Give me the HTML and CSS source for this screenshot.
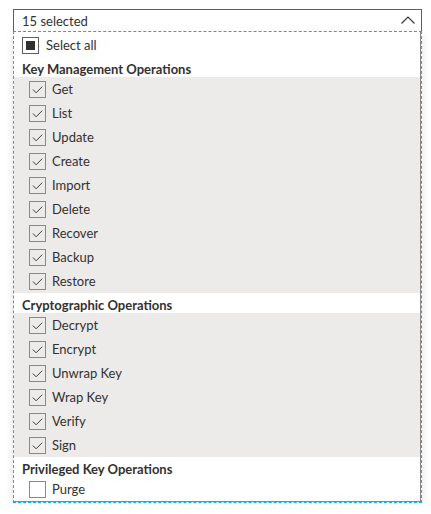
FILE: index.html
```html
<!DOCTYPE html>
<html>
<head>
<meta charset="utf-8">
<link rel="stylesheet" href="styles.css">
</head>
<body>
<div class="dropdown">
  <div class="title">
    <span class="title-text">15 selected</span>
    <svg class="chevron" width="14" height="8" viewBox="0 0 14 8"><polyline points="0.5,7.5 7,1 13.5,7.5" fill="none" stroke="#323130" stroke-width="1.1"/></svg>
  </div>
  <div class="panel">
    <div class="inner">
      <div class="row selectall">
        <span class="box"><span class="indet"></span></span>
        <span class="label">Select all</span>
      </div>

      <div class="group">Key Management Operations</div>
      <div class="items">
        <div class="row"><span class="box"><svg viewBox="0 0 16 16"><polyline points="3,8 6.5,11.5 13,5" /></svg></span><span class="label">Get</span></div>
        <div class="row"><span class="box"><svg viewBox="0 0 16 16"><polyline points="3,8 6.5,11.5 13,5" /></svg></span><span class="label">List</span></div>
        <div class="row"><span class="box"><svg viewBox="0 0 16 16"><polyline points="3,8 6.5,11.5 13,5" /></svg></span><span class="label">Update</span></div>
        <div class="row"><span class="box"><svg viewBox="0 0 16 16"><polyline points="3,8 6.5,11.5 13,5" /></svg></span><span class="label">Create</span></div>
        <div class="row"><span class="box"><svg viewBox="0 0 16 16"><polyline points="3,8 6.5,11.5 13,5" /></svg></span><span class="label">Import</span></div>
        <div class="row"><span class="box"><svg viewBox="0 0 16 16"><polyline points="3,8 6.5,11.5 13,5" /></svg></span><span class="label">Delete</span></div>
        <div class="row"><span class="box"><svg viewBox="0 0 16 16"><polyline points="3,8 6.5,11.5 13,5" /></svg></span><span class="label">Recover</span></div>
        <div class="row"><span class="box"><svg viewBox="0 0 16 16"><polyline points="3,8 6.5,11.5 13,5" /></svg></span><span class="label">Backup</span></div>
        <div class="row"><span class="box"><svg viewBox="0 0 16 16"><polyline points="3,8 6.5,11.5 13,5" /></svg></span><span class="label">Restore</span></div>
      </div>

      <div class="group">Cryptographic Operations</div>
      <div class="items">
        <div class="row"><span class="box"><svg viewBox="0 0 16 16"><polyline points="3,8 6.5,11.5 13,5" /></svg></span><span class="label">Decrypt</span></div>
        <div class="row"><span class="box"><svg viewBox="0 0 16 16"><polyline points="3,8 6.5,11.5 13,5" /></svg></span><span class="label">Encrypt</span></div>
        <div class="row"><span class="box"><svg viewBox="0 0 16 16"><polyline points="3,8 6.5,11.5 13,5" /></svg></span><span class="label">Unwrap Key</span></div>
        <div class="row"><span class="box"><svg viewBox="0 0 16 16"><polyline points="3,8 6.5,11.5 13,5" /></svg></span><span class="label">Wrap Key</span></div>
        <div class="row"><span class="box"><svg viewBox="0 0 16 16"><polyline points="3,8 6.5,11.5 13,5" /></svg></span><span class="label">Verify</span></div>
        <div class="row"><span class="box"><svg viewBox="0 0 16 16"><polyline points="3,8 6.5,11.5 13,5" /></svg></span><span class="label">Sign</span></div>
      </div>

      <div class="group">Privileged Key Operations</div>
      <div class="items plain">
        <div class="row"><span class="box"></span><span class="label">Purge</span></div>
      </div>
    </div>
  </div>
</div>
</body>
</html>
```

FILE: styles.css
```css
* { box-sizing: border-box; }
html, body { margin: 0; padding: 0; background: #ffffff; }
body {
  font-family: Lato, "Noto Sans", sans-serif;
  font-size: 13px;
  color: #323130;
}
.dropdown {
  margin: 9px 0 0 13px;
  width: 409px;
}
.title {
  height: 23px;
  border: 1px solid #8b3ba0;
  display: flex;
  align-items: center;
  justify-content: space-between;
  padding: 0 6px 0 8px;
}
.title-text { line-height: 20px; }
.chevron { display: block; margin-top: -1px; }
.panel {
  margin-top: -1px;
  border: 1px dashed #00b4f0;
  box-shadow: 0 4px 8px rgba(0, 0, 0, 0.12);
  background: #ffffff;
}
.inner {
  border-right: 1px solid #8a8886;
  border-bottom: 1px solid #8a8886;
  padding-top: 1px;
}
.row {
  height: 24px;
  display: flex;
  align-items: center;
  padding-left: 15px;
}
.row.selectall { padding-left: 8px; }
.items { background: #edebe9; }
.items.plain { background: #ffffff; }
.group {
  height: 20px;
  padding: 4px 0 0 8px;
  line-height: 17px;
  font-weight: 700;
}
.box {
  width: 17px;
  height: 17px;
  border: 1px solid #8a8886;
  display: flex;
  align-items: center;
  justify-content: center;
  margin-right: 6px;
  flex: none;
}
.selectall .box { border-color: #605e5c; margin-right: 7px; }
.indet {
  width: 9px;
  height: 9px;
  background: #323130;
}
.box svg {
  width: 15px;
  height: 15px;
  fill: none;
  stroke: #323130;
  stroke-width: 1;
}
.label { line-height: 20px; }
```
